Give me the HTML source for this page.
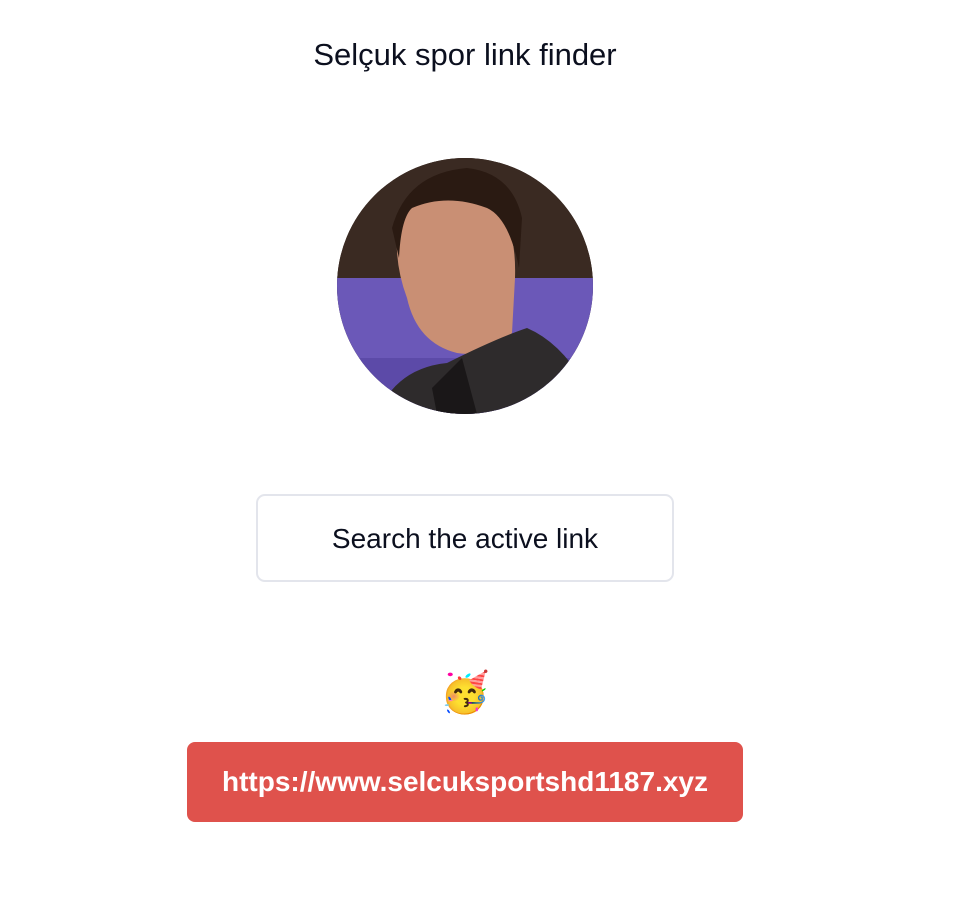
<!DOCTYPE html>
<html><head><style>
body{margin:0;background:#fff;width:960px;height:908px;position:relative;font-family:"Liberation Sans",sans-serif;overflow:hidden}
.t{position:absolute;top:37px;left:0;width:930px;text-align:center;font-size:31px;color:#0b0f1e}
.av{position:absolute;left:337px;top:158px;width:256px;height:256px;border-radius:50%;overflow:hidden}
.btn{position:absolute;left:256px;top:494px;width:414px;height:84px;border:2px solid #e3e5ec;border-radius:9px;text-align:center;line-height:86px;font-size:28px;color:#0b0f1e}
.em{position:absolute;left:440px;top:668px;font-size:40px;line-height:50px}
.link{position:absolute;left:187px;top:742px;width:556px;height:80px;background:#df524c;border-radius:8px;color:#fff;text-align:center;line-height:80px;font-size:28px;font-weight:bold}
</style></head><body>
<div class="t">Selçuk spor link finder</div>
<div class="av"><svg width="256" height="256" viewBox="0 0 256 256">
<rect width="256" height="256" fill="#2b1b16"/>
<rect y="0" width="256" height="120" fill="#3a2a22"/>
<rect y="120" width="256" height="136" fill="#6b58b8"/>
<rect y="200" width="256" height="56" fill="#5c4aa8"/>
<path d="M62 60 Q95 25 150 40 Q180 60 178 120 L175 175 Q150 200 120 195 Q80 185 70 140 Q55 100 62 60Z" fill="#c98f74"/>
<path d="M55 70 Q70 15 130 10 Q175 15 185 60 L182 110 Q172 60 150 50 Q110 35 75 50 Q64 60 62 100Z" fill="#2a1a12"/>
<path d="M40 256 Q60 210 110 205 Q160 180 190 170 Q225 185 250 230 L256 256Z" fill="#2e2b2c"/>
<path d="M95 230 L125 200 L140 256 L100 256Z" fill="#1a1718"/>
</svg></div>
<div class="btn">Search the active link</div>
<div class="em">🥳</div>
<div class="link">https://www.selcuksportshd1187.xyz</div>
</body></html>
